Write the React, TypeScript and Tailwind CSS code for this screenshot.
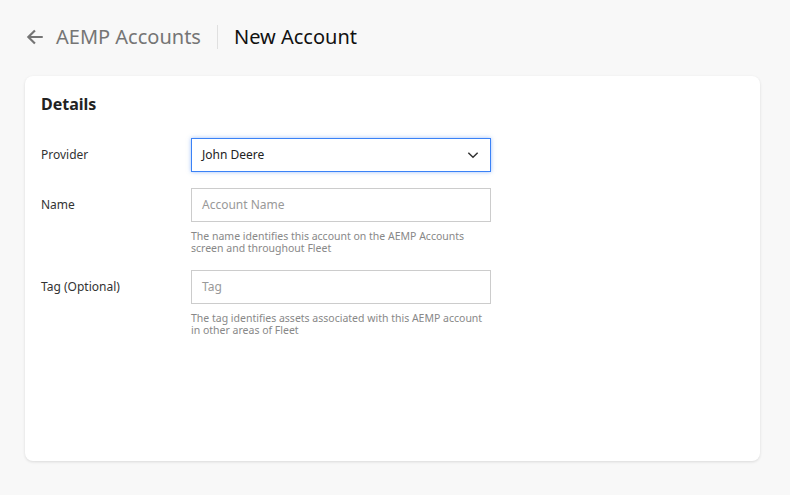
export default function App() {
  return (
    <div className="w-[790px] h-[495px] bg-[#f8f8f8] font-['Liberation_Sans',Arial,sans-serif] pl-[25px] pr-[30px] overflow-hidden">
      <div className="h-[76px] flex items-center pb-[2px]">
        <svg width="20" height="20" viewBox="0 0 24 24" className="mr-[11px]" fill="none" stroke="#757575" strokeWidth="2.6" strokeLinecap="square">
          <path d="M20 12H5M11 5l-7 7 7 7" />
        </svg>
        <span className="text-[20px] text-[#757575]">AEMP Accounts</span>
        <div className="w-px h-[24px] bg-[#e0e0e0] mx-[16px]" />
        <span className="text-[20px] text-[#111]">New Account</span>
      </div>
      <div className="bg-white rounded-[8px] shadow-[0_1px_3px_rgba(0,0,0,0.12)] h-[385px] px-[16px] pt-[18px]">
        <div className="text-[16px] font-bold text-[#222] leading-[20px]">Details</div>
        <div className="mt-[24px] flex">
          <div className="w-[150px] text-[12px] text-[#333] leading-[34px]">Provider</div>
          <div className="w-[300px] h-[34px] border border-[#3b82f6] shadow-[0_0_4px_rgba(59,130,246,0.5)] flex items-center justify-between px-[10px] text-[12px] text-[#222]">
            <span>John Deere</span>
            <svg width="14" height="14" viewBox="0 0 24 24" fill="none" stroke="#333" strokeWidth="2.5"><path d="M4 8l8 8 8-8" /></svg>
          </div>
        </div>
        <div className="mt-[16px] flex">
          <div className="w-[150px] text-[12px] text-[#333] leading-[34px]">Name</div>
          <div>
            <div className="w-[300px] h-[34px] border border-[#ccc] flex items-center px-[10px] text-[12px] text-[#999]">Account Name</div>
            <div className="mt-[8px] text-[10.5px] leading-[12px] text-[#888] w-[300px]">The name identifies this account on the AEMP Accounts<br />screen and throughout Fleet</div>
          </div>
        </div>
        <div className="mt-[16px] flex">
          <div className="w-[150px] text-[12px] text-[#333] leading-[34px]">Tag (Optional)</div>
          <div>
            <div className="w-[300px] h-[34px] border border-[#ccc] flex items-center px-[10px] text-[12px] text-[#999]">Tag</div>
            <div className="mt-[8px] text-[10.5px] leading-[12px] text-[#888] w-[300px]">The tag identifies assets associated with this AEMP account<br />in other areas of Fleet</div>
          </div>
        </div>
      </div>
    </div>
  );
}
